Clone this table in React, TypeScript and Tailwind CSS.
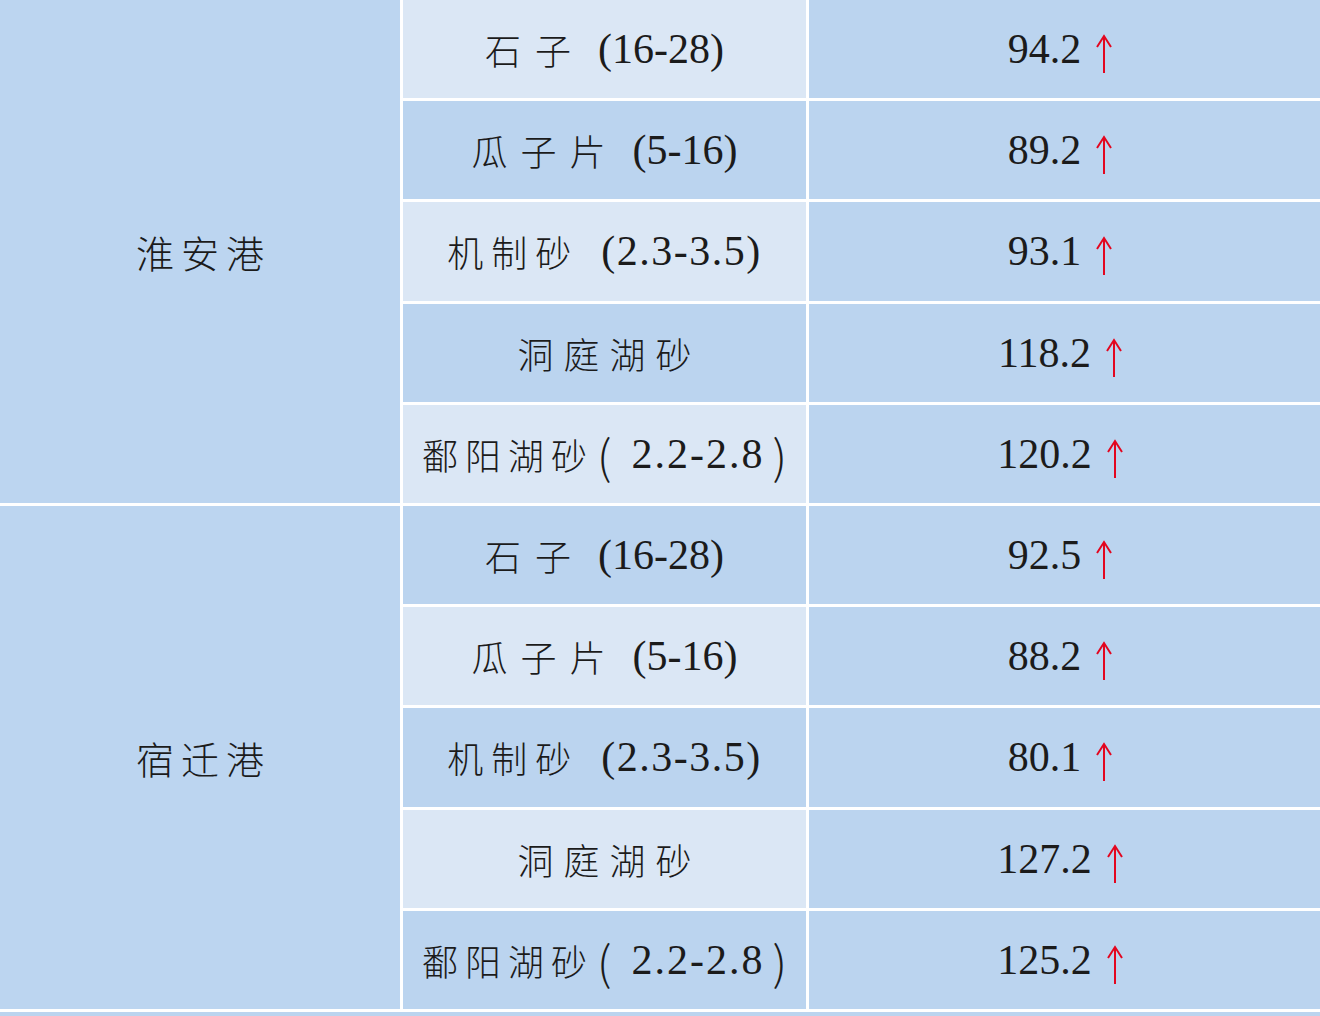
type Item = {
  cn: string;
  spec: string;
  price: string;
  track: string; // tracking on the Chinese part, cancelled at the end by a matching negative margin
  gap: string;
  wide?: boolean;
};

const items1: Item[] = [
  { cn: "石子", spec: "(16-28)", price: "94.2", track: "tracking-[14px] mr-[-14px]", gap: "ml-[27px]" },
  { cn: "瓜子片", spec: "(5-16)", price: "89.2", track: "tracking-[13px] mr-[-13px]", gap: "ml-[27px]" },
  { cn: "机制砂", spec: "(2.3-3.5)", price: "93.1", track: "tracking-[8px] mr-[-8px]", gap: "ml-[30px] tracking-[1.5px]" },
  { cn: "洞庭湖砂", spec: "", price: "118.2", track: "tracking-[10px] mr-[-10px]", gap: "" },
  { cn: "鄱阳湖砂", spec: "2.2-2.8", price: "120.2", track: "tracking-[7px] mr-[-7px]", gap: "", wide: true },
];

const groups = [
  { port: "淮安港", items: items1 },
  {
    port: "宿迁港",
    items: items1.map((it, i) => ({ ...it, price: ["92.5", "88.2", "80.1", "127.2", "125.2"][i] })),
  },
];

const cjk = "font-['Noto_Sans_CJK_SC',sans-serif]";
const serif = "font-['Liberation_Serif','Noto_Sans_CJK_SC',serif]";

function UpArrow() {
  return (
    <svg width="18" height="40" viewBox="0 0 18 40" className="mt-[10px] shrink-0">
      <path d="M9 39 L9 3" stroke="#e3061f" strokeWidth="2" fill="none" />
      <path d="M2 13 L9 2 L16 13" stroke="#e3061f" strokeWidth="2" fill="none" />
    </svg>
  );
}

function Spec({ it }: { it: Item }) {
  if (!it.spec) return null;
  if (it.wide) {
    // thin tall brackets from the CJK face, figures in serif
    return (
      <span className="flex items-center">
        <span className={`${cjk} font-extralight text-[46px] ml-[10px] mr-[20px]`}>(</span>
        <span className={`${serif} text-[42px] tracking-[2px]`}>{it.spec}</span>
        <span className={`${cjk} font-extralight text-[46px] ml-[8px]`}>)</span>
      </span>
    );
  }
  return <span className={`${serif} text-[42px] ${it.gap}`}>{it.spec}</span>;
}

export default function App() {
  return (
    <div className="w-[1320px] h-[1016px] overflow-hidden bg-[#bbd4ef] text-[#1b1b1b]">
      <div className="grid grid-cols-[400px_403px_1fr] grid-rows-[repeat(10,98.2px)] gap-[3px] bg-white border-b-[3px] border-white">
        {groups.map((g, gi) => (
          <div key={g.port} className="contents">
            <div
              className={`${gi === 0 ? "row-start-1" : "row-start-6"} row-span-5 col-start-1 flex items-center justify-center bg-[#bcd5f0]`}
            >
              <span className={`${cjk} font-light text-[38px] tracking-[7px] mr-[-7px]`}>{g.port}</span>
            </div>
            {g.items.map((it, i) => {
              const idx = gi * 5 + i;
              const light = idx % 2 === 0;
              return (
                <div key={idx} className="contents">
                  <div
                    className={`col-start-2 flex items-center justify-center leading-none text-[36px] ${
                      light ? "bg-[#dbe7f5]" : "bg-[#bbd4ef]"
                    }`}
                  >
                    <span className={`${cjk} font-light ${it.track}`}>{it.cn}</span>
                    <Spec it={it} />
                  </div>
                  <div className="col-start-3 flex items-center justify-center bg-[#bbd4ef] pr-[8px]">
                    <span className={`${serif} text-[42px] leading-none`}>{it.price}</span>
                    <span className="ml-[14px]">
                      <UpArrow />
                    </span>
                  </div>
                </div>
              );
            })}
          </div>
        ))}
      </div>
    </div>
  );
}
